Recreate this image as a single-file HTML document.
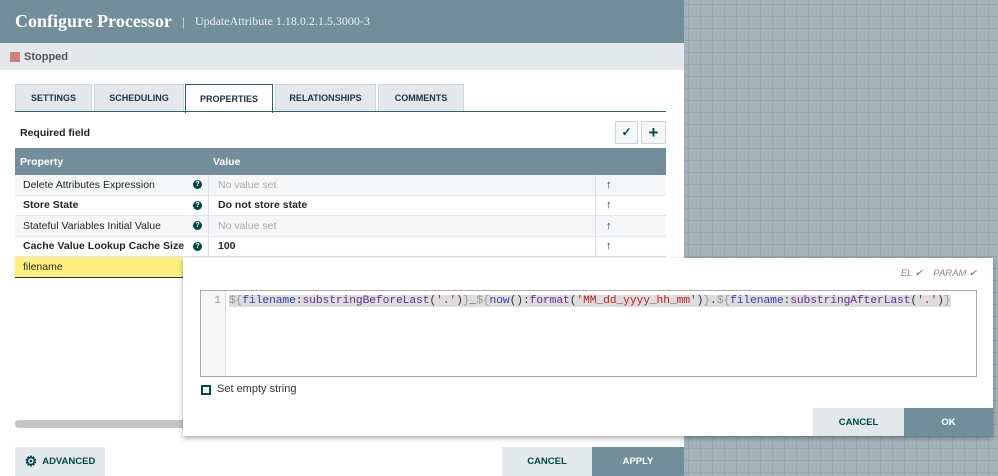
<!DOCTYPE html>
<html><head><style>
*{box-sizing:border-box;margin:0;padding:0}
body{width:998px;height:476px;overflow:hidden;position:relative;font-family:"Liberation Sans",sans-serif;background:#a4b3ba;
background-image:linear-gradient(#97a7ae 1px,transparent 1px),linear-gradient(90deg,#97a7ae 1px,transparent 1px);background-size:12px 12px;background-position:4px 4px}
.panel{position:absolute;left:0;top:0;width:684px;height:476px;background:#fff}
.hdr{height:43px;background:#728e9b;color:#fff;display:flex;align-items:center;padding-left:15px}
.hdr b{font-size:18px;font-family:"Liberation Serif",serif}
.hdr span{font-size:12px;margin-left:10px;color:#eef;font-family:"Liberation Serif",serif}
.status{height:27px;background:#e3e8eb;display:flex;align-items:center;padding-left:10px;font-size:11px;font-weight:bold;color:#555}
.status i{width:10px;height:10px;background:#d07f7f;display:inline-block;margin-right:4px}
.tab{position:absolute;top:84px;height:28px;background:#e3e8eb;border:1px solid #cfd6d9;font-size:9px;font-weight:bold;color:#234;display:flex;align-items:center;justify-content:center}
.tab.act{background:#fff;border-color:#2f5f6a;border-bottom:none;height:29px}
.tabline{position:absolute;left:15px;top:111px;width:651px;height:1px;background:#2f5f6a}
.tbl{position:absolute;left:15px;top:148px;width:651px;font-size:10.5px;color:#262626}
.th{height:27px;background:#728e9b;color:#fff;font-weight:bold;display:flex;align-items:center;position:relative}
.row{height:20.5px;display:flex;align-items:center;border-bottom:1px solid #e1e6e8;background:#f4f6f7;position:relative}
.c1{position:absolute;left:8px}.c2{position:absolute;left:203px}.q{position:absolute;left:178px;width:9px;height:9px;border-radius:50%;background:#004849;color:#fff;font-size:7px;text-align:center;line-height:9px;font-weight:bold}
.sep{position:absolute;left:193px;top:0;bottom:0;width:1px;background:#dde}
.sep2{position:absolute;left:580px;top:0;bottom:0;width:1px;background:#dde}
.ar{position:absolute;left:591px;font-size:11px;color:#004849;font-weight:bold}
.btn{position:absolute;font-size:9.5px;font-weight:bold;display:flex;align-items:center;justify-content:center}
.pop{position:absolute;left:183px;top:258px;width:810px;height:178px;background:#fff;box-shadow:0 2px 5px rgba(0,0,0,.35)}
.ed{position:absolute;left:17px;top:32px;width:777px;height:87px;border:1px solid #aaa;background:#fff}
.gut{position:absolute;left:0;top:0;width:25px;height:100%;background:#f7f7f7;border-right:1px solid #ddd;font-family:"Liberation Mono",monospace;font-size:11px;color:#999;text-align:right;padding:4px 4px 0 0}
.code{position:absolute;left:28px;top:4px;font-family:"Liberation Mono",monospace;font-size:11.3px;background:#ddd;white-space:pre;letter-spacing:-.1px}
.g{color:#999}.b{color:#3344aa}.p{color:#6a2a9a}.r{color:#b22}.k{color:#333}
</style></head><body>
<div class="panel">
<div class="hdr"><b>Configure Processor</b><span style="color:#ccd;margin-left:10px;font-family:'Liberation Sans'">|</span><span>UpdateAttribute 1.18.0.2.1.5.3000-3</span></div>
<div class="status"><i></i>Stopped</div>
<div class="tab" style="left:15px;width:77px">SETTINGS</div>
<div class="tab" style="left:94px;width:90px">SCHEDULING</div>
<div class="tab act" style="left:185px;width:88px">PROPERTIES</div>
<div class="tab" style="left:275px;width:101px">RELATIONSHIPS</div>
<div class="tab" style="left:378px;width:86px">COMMENTS</div>
<div class="tabline"></div>
<div style="position:absolute;left:20px;top:127px;font-size:10.5px;font-weight:bold;color:#222">Required field</div>
<div style="position:absolute;left:615px;top:121px;width:23px;height:23px;border:1px solid #cfd6d9;background:#f4f6f7;text-align:center;line-height:21px;font-size:12px;color:#004849;font-weight:bold">✓</div>
<div style="position:absolute;left:641px;top:121px;width:25px;height:23px;border:1px solid #cfd6d9;background:#f4f6f7;text-align:center;line-height:21px;font-size:17px;font-weight:bold;color:#004849">+</div>
<div class="tbl">
<div class="th"><span class="c1" style="left:5px">Property</span><span class="c2" style="left:198px">Value</span></div>
<div class="row"><span class="c1">Delete Attributes Expression</span><span class="q">?</span><span class="sep"></span><span class="c2" style="color:#aaa">No value set</span><span class="sep2"></span><span class="ar">↑</span></div>
<div class="row" style="background:#fff"><b class="c1">Store State</b><span class="q">?</span><span class="sep"></span><b class="c2">Do not store state</b><span class="sep2"></span><span class="ar">↑</span></div>
<div class="row"><span class="c1">Stateful Variables Initial Value</span><span class="q">?</span><span class="sep"></span><span class="c2" style="color:#aaa">No value set</span><span class="sep2"></span><span class="ar">↑</span></div>
<div class="row" style="background:#fff"><b class="c1">Cache Value Lookup Cache Size</b><span class="q">?</span><span class="sep"></span><b class="c2">100</b><span class="sep2"></span><span class="ar">↑</span></div>
<div class="row" style="width:168px;background:#fff080;border-bottom:1px solid #333;height:21px"><span class="c1">filename</span></div>
</div>
<div style="position:absolute;left:15px;top:420px;width:180px;height:8px;border-radius:4px;background:#c4c4c4"></div>
<div class="btn" style="left:15px;top:447px;width:90px;height:29px;background:#e3e8eb;color:#004849"><span style="font-size:14px;margin-right:5px">⚙</span>ADVANCED</div>
<div class="btn" style="left:502px;top:447px;width:90px;height:29px;background:#e3e8eb;color:#004849">CANCEL</div>
<div class="btn" style="left:592px;top:447px;width:92px;height:29px;background:#728e9b;color:#fff">APPLY</div>
</div>
<div class="pop">
<div style="position:absolute;right:16px;top:10px;font-size:9.5px;font-style:italic;color:#888">EL ✔ &nbsp;&nbsp; PARAM ✔</div>
<div class="ed"><div class="gut">1</div><div class="code"><span class="g">${</span><span class="b">filename</span><span class="k">:</span><span class="p">substringBeforeLast</span><span class="k">(</span><span class="r">'.'</span><span class="k">)</span><span class="g">}</span><span class="k">_</span><span class="g">${</span><span class="b">now</span><span class="k">():</span><span class="p">format</span><span class="k">(</span><span class="r">'MM_dd_yyyy_hh_mm'</span><span class="k">)</span><span class="g">}</span><span class="k">.</span><span class="g">${</span><span class="b">filename</span><span class="k">:</span><span class="p">substringAfterLast</span><span class="k">(</span><span class="r">'.'</span><span class="k">)</span><span class="g">}</span></div></div>
<div style="position:absolute;left:18px;top:127px;width:10px;height:10px;border:2px solid #004849"></div>
<div style="position:absolute;left:34px;top:125px;font-size:11px;color:#333">Set empty string</div>
<div class="btn" style="left:630px;top:150px;width:91px;height:28px;background:#e3e8eb;color:#004849">CANCEL</div>
<div class="btn" style="left:721px;top:150px;width:89px;height:28px;background:#728e9b;color:#fff">OK</div>
</div>
</body></html>
